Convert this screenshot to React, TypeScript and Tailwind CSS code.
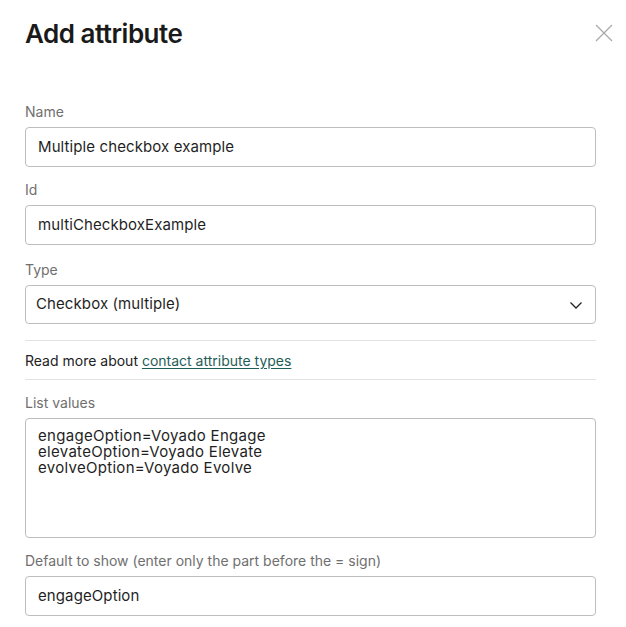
import React from "react";

const font = { fontFamily: "Inter, 'Noto Sans', sans-serif" };

function Label({ children }: { children: React.ReactNode }) {
  return <div className="text-[14px] leading-[20px] text-[#6f6f6f] mb-[5px]">{children}</div>;
}

function Field({ label, value, className }: { label: string; value: string; className?: string }) {
  return (
    <div className={className}>
      <Label>{label}</Label>
      <div className="h-[40px] rounded-[4px] border border-[#bdbdbd] px-3 flex items-center text-[15px] tracking-[0.1px] text-[#1f1f1f]">
        {value}
      </div>
    </div>
  );
}

export default function App() {
  return (
    <div className="w-[626px] h-[627px] bg-white overflow-hidden" style={font}>
      <div className="px-[25px] pr-[30px]">
        <div className="flex items-center justify-between pt-[17px] h-[50px]">
          <h1 className="text-[26px] font-semibold tracking-[-0.5px] text-[#1a1a1a] leading-[32px]">Add attribute</h1>
          <svg width="20" height="20" viewBox="0 0 20 20" className="mr-[-18px] mt-[-1px]">
            <path d="M2 2 L18 18 M18 2 L2 18" stroke="#a8a8a8" strokeWidth="1.2" />
          </svg>
        </div>
        <div className="h-[52px]" />
        <Field label="Name" value="Multiple checkbox example" className="mb-[13px]" />
        <Field label="Id" value="multiCheckboxExample" className="mb-[15px]" />
        <div>
          <Label>Type</Label>
          <div className="h-[39px] rounded-[4px] border border-[#bdbdbd] pl-[10px] pr-[12px] flex items-center justify-between text-[15px] tracking-[0.1px] text-[#1f1f1f]">
            <span>Checkbox (multiple)</span>
            <svg width="14" height="14" viewBox="0 0 14 14">
              <path d="M1.5 4.5 L7 10 L12.5 4.5" fill="none" stroke="#222" strokeWidth="1.3" />
            </svg>
          </div>
        </div>
        <div className="mt-[16px] border-t border-[#e3e3e3]" />
        <div className="h-[38px] flex items-center text-[14px] text-[#222]">
          <span>
            Read more about{" "}
            <a className="text-[#1f5e58] underline underline-offset-2 decoration-[#1f5e58]">contact attribute types</a>
          </span>
        </div>
        <div className="border-t border-[#e3e3e3]" />
        <div className="mt-[13px]">
          <Label>List values</Label>
          <div className="h-[120px] rounded-[4px] border border-[#bdbdbd] px-3 pt-[9px] text-[15px] leading-[16px] tracking-[0.3px] text-[#1f1f1f]">
            <div>engageOption=Voyado Engage</div>
            <div>elevateOption=Voyado Elevate</div>
            <div>evolveOption=Voyado Evolve</div>
          </div>
        </div>
        <Field label="Default to show (enter only the part before the = sign)" value="engageOption" className="mt-[13px]" />
      </div>
    </div>
  );
}
